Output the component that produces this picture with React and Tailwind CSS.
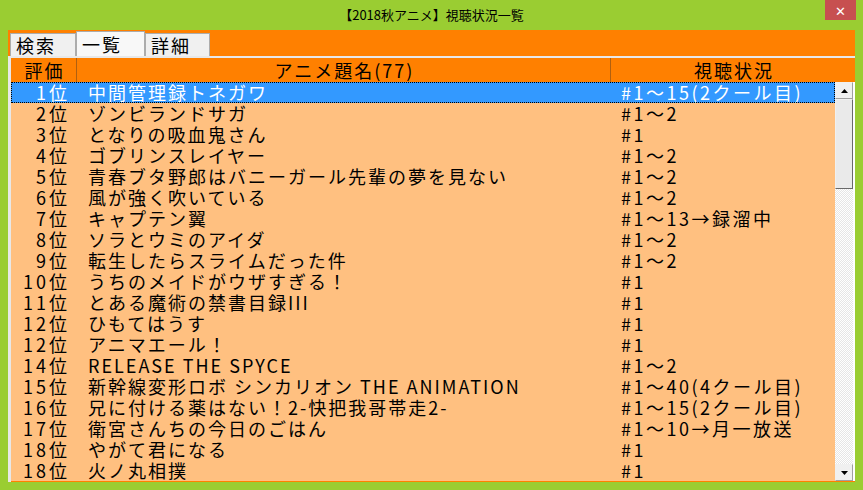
import React from "react";

// 視聴状況一覧 — WinForms 風のリストビュー画面
const ROWS = [
  ["1位", "中間管理録トネガワ", "#1～15(2クール目)"],
  ["2位", "ゾンビランドサガ", "#1～2"],
  ["3位", "となりの吸血鬼さん", "#1"],
  ["4位", "ゴブリンスレイヤー", "#1～2"],
  ["5位", "青春ブタ野郎はバニーガール先輩の夢を見ない", "#1～2"],
  ["6位", "風が強く吹いている", "#1～2"],
  ["7位", "キャプテン翼", "#1～13→録溜中"],
  ["8位", "ソラとウミのアイダ", "#1～2"],
  ["9位", "転生したらスライムだった件", "#1～2"],
  ["10位", "うちのメイドがウザすぎる！", "#1"],
  ["11位", "とある魔術の禁書目録III", "#1"],
  ["12位", "ひもてはうす", "#1"],
  ["12位", "アニマエール！", "#1"],
  ["14位", "RELEASE THE SPYCE", "#1～2"],
  ["15位", "新幹線変形ロボ シンカリオン THE ANIMATION", "#1～40(4クール目)"],
  ["16位", "兄に付ける薬はない！2-快把我哥帯走2-", "#1～15(2クール目)"],
  ["17位", "衛宮さんちの今日のごはん", "#1～10→月一放送"],
  ["18位", "やがて君になる", "#1"],
  ["18位", "火ノ丸相撲", "#1"],
];

const TABS = [
  { label: "検索", w: "w-[66px]", active: false },
  { label: "一覧", w: "w-[69px]", active: true },
  { label: "詳細", w: "w-[65px]", active: false },
];

function Arrow({ up }) {
  return (
    <svg width="7" height="4" viewBox="0 0 7 4">
      <path d={up ? "M3.5 0L7 4H0z" : "M0 0h7L3.5 4z"} fill="#000" />
    </svg>
  );
}

function ScrollButton({ up }) {
  return (
    <div className="flex h-[17px] items-center justify-center border border-[#f0f0f0] border-b-[#a0a0a0] border-r-[#a0a0a0] bg-[#f0f0f0]">
      <Arrow up={up} />
    </div>
  );
}

export default function App() {
  return (
    <div className="flex h-[490px] w-[863px] flex-col overflow-hidden bg-[#9acd32] font-['Noto_Sans_CJK_JP',sans-serif] text-black">
      {/* title bar */}
      <div className="relative flex h-[30px] shrink-0 items-center justify-center pb-[1px] text-[13px]">
        【2018秋アニメ】視聴状況一覧
        <div className="absolute right-[7px] top-0 flex h-[20px] w-[31px] items-center justify-center bg-[#c75050] text-[13px] leading-none text-white">
          ✕
        </div>
      </div>

      <div className="mx-[8px] flex flex-1 flex-col bg-[#ff8000]">
        {/* tabs */}
        <div className="flex h-[26px] shrink-0 items-end pl-[2px] text-[18px] leading-none tracking-[2px]">
          {TABS.map((t) => (
            <div key={t.label}
              className={`${t.w} flex items-center border border-b-0 border-[#acacac] pl-[5px] ${t.active ? "h-[25px] bg-[#f8f8f8]" : "h-[23px] bg-[#f0f0f0]"}`}>
              {t.label}
            </div>
          ))}
        </div>

        <div className="flex flex-1 flex-col border-l-[3px] border-t-2 border-[#e8e8e8] pb-[1px]">
          {/* header */}
          <div className="flex h-[24px] shrink-0 text-[18px] leading-[24px] tracking-[2px]">
            <div className="w-[66px] border-r border-[#b06010] pl-[2px] text-center">評価</div>
            <div className="w-[534px] border-r border-[#b06010] pl-[2px] text-center">アニメ題名(77)</div>
            <div className="flex-1 pl-[2px] text-center">視聴状況</div>
          </div>

          <div className="flex flex-1">
            {/* rows */}
            <div className="flex-1 bg-[#ffc080] text-[18px] leading-[21px]">
              {ROWS.map(([rank, title, status], i) => (
                <div key={i}
                  className={`flex h-[21px] whitespace-nowrap ${i === 0 ? "bg-[#3399ff] text-white outline-1 -outline-offset-1 outline-dotted outline-black" : ""}`}>
                  <div className="w-[66px] shrink-0 pr-[7px] text-right tracking-[3px]">{rank}</div>
                  <div className="w-[534px] shrink-0 pl-[11px] tracking-[2px]">{title}</div>
                  <div className="flex-1 pl-[10px] tracking-[2.5px]">{status}</div>
                </div>
              ))}
            </div>

            {/* scrollbar */}
            <div className="flex w-[18px] flex-col bg-[repeating-conic-gradient(#ffffff_0_25%,#e6e6e6_0_50%)] bg-[length:2px_2px]">
              <ScrollButton up />
              <div className="h-[90px] border border-[#f0f0f0] border-b-[#696969] border-r-[#696969] bg-[#eaeaea]" />
              <div className="flex-1" />
              <ScrollButton />
            </div>
            <div className="w-[2px] bg-white" />
          </div>
        </div>
      </div>
      <div className="h-[8px] shrink-0" />
    </div>
  );
}
